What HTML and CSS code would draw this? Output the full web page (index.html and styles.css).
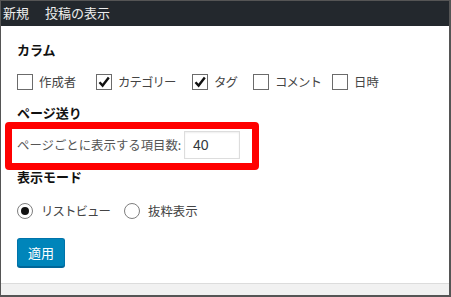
FILE: index.html
```html
<!DOCTYPE html>
<html lang="ja">
<head>
<meta charset="utf-8">
<link rel="stylesheet" href="styles.css">
</head>
<body>
<div class="frame">
  <div class="topbar"><span>新規</span><span>投稿の表示</span></div>
  <div class="panel">
    <h5 class="heading h-columns">カラム</h5>
    <div class="opts">
      <label class="opt w1"><span class="cb"></span>作成者</label>
      <label class="opt w2"><span class="cb checked"><svg viewBox="0 0 16 16" width="16" height="16"><path d="M3.5 8.2 L6.6 11.6 L12.8 3.6" fill="none" stroke="#111" stroke-width="2.4"/></svg></span><span class="kana">カテゴリー</span></label>
      <label class="opt w3"><span class="cb checked"><svg viewBox="0 0 16 16" width="16" height="16"><path d="M3.5 8.2 L6.6 11.6 L12.8 3.6" fill="none" stroke="#111" stroke-width="2.4"/></svg></span><span class="kana">タグ</span></label>
      <label class="opt w4"><span class="cb"></span><span class="kana">コメント</span></label>
      <label class="opt"><span class="cb"></span>日時</label>
    </div>
    <h5 class="heading h-paging">ページ送り</h5>
    <div class="perpage">
      <label>ページごとに表示する項目数:</label>
      <span class="num">40</span>
    </div>
    <h5 class="heading h-mode">表示モード</h5>
    <div class="opts radios">
      <label class="opt r1"><span class="rd on"></span><span class="kana">リストビュー</span></label>
      <label class="opt"><span class="rd"></span>抜粋表示</label>
    </div>
    <button class="apply">適用</button>
  </div>
  <div class="foot"></div>
  <div class="highlight"></div>
</div>
</body>
</html>
```
FILE: styles.css
```css
* { box-sizing: border-box; }
html, body { margin: 0; padding: 0; background: #fff; }
body {
  font-family: "Noto Sans CJK JP", "Noto Sans", sans-serif;
  font-size: 12.4px;
  color: #444;
}
.frame {
  position: relative;
  width: 451px;
  height: 297px;
  border-style: solid;
  border-color: #555;
  border-width: 1px 2px 2px 1px;
  display: flex;
  flex-direction: column;
  overflow: hidden;
}
.topbar {
  height: 25px;
  background: #23282d;
  color: #eee;
  display: flex;
  gap: 16px;
  padding-left: 2px;
  line-height: 23px;
  font-size: 13px;
}
.panel {
  height: 257px;
  padding: 0 16px;
  display: flex;
  flex-direction: column;
  align-items: flex-start;
}
.heading {
  margin: 0;
  font-size: 13px;
  font-weight: bold;
  color: #111;
  line-height: 16px;
}
.h-columns { margin-top: 16px; }
.h-paging { margin-top: 15px; }
.h-mode { margin-top: 10px; }
.opts {
  display: flex;
  margin-top: 16px;
  height: 16px;
  align-items: center;
}
.opt {
  display: flex;
  align-items: center;
  gap: 6px;
  line-height: 16px;
  white-space: nowrap;
}
.kana { letter-spacing: -0.9px; }
.w1 { width: 79px; }
.w2 { width: 96px; }
.w3 { width: 61px; }
.w4 { width: 79px; }
.cb {
  width: 16px;
  height: 16px;
  border: 1px solid #6b6b6b;
  background: #fff;
  display: inline-block;
  position: relative;
  flex: none;
}
.cb svg { position: absolute; left: -1px; top: -1px; }
.perpage {
  margin-top: 10px;
  height: 28px;
  display: flex;
  align-items: center;
}
.perpage label { color: #555; width: 167px; }
.num {
  width: 56px;
  height: 28px;
  border: 1px solid #ddd;
  box-shadow: inset 0 1px 2px rgba(0,0,0,0.07);
  padding-left: 8px;
  line-height: 26px;
  color: #32373c;
  font-family: "Liberation Sans", Arial, sans-serif;
  font-size: 14px;
}
.radios { margin-top: 18px; }
.radios .opt { gap: 8px; }
.r1 { width: 107px; }
.rd {
  width: 16px;
  height: 16px;
  border-radius: 50%;
  border: 1px solid #7e7e7e;
  background: #fff;
  display: inline-flex;
  align-items: center;
  justify-content: center;
  flex: none;
}
.rd.on::after {
  content: "";
  width: 8px;
  height: 8px;
  border-radius: 50%;
  background: #111;
}
.apply {
  margin-top: 19px;
  width: 48px;
  height: 29px;
  background: #0085ba;
  border: 1px solid #0073aa;
  border-bottom-color: #006799;
  box-shadow: 0 1px 0 #006799;
  border-radius: 3px;
  color: #fff;
  font-family: inherit;
  font-size: 13px;
  padding: 0;
}
.foot {
  flex: 1;
  background: #f1f1f1;
  border-top: 1px solid #dcdcdc;
}
.highlight {
  position: absolute;
  left: 4px;
  top: 121px;
  width: 254px;
  height: 48px;
  border: 7px solid #ff0000;
  border-radius: 4px;
  pointer-events: none;
}
```
